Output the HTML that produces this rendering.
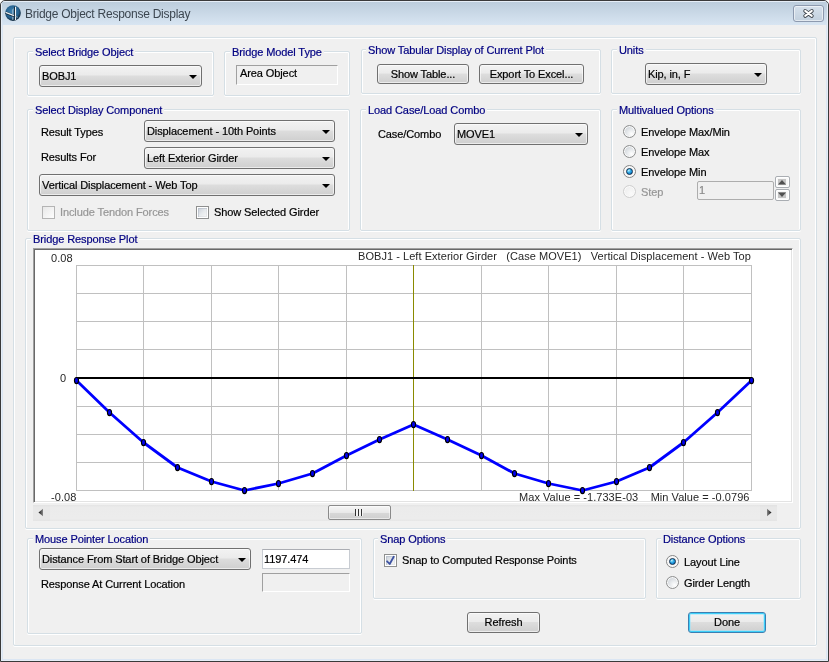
<!DOCTYPE html><html><head><meta charset="utf-8"><style>
*{margin:0;padding:0}
html,body{width:829px;height:662px;overflow:hidden;background:#fff}
body{position:relative;font-family:"Liberation Sans",sans-serif;font-size:11px}
.ui,.gl,.pt{position:absolute;white-space:pre;line-height:13px;font-size:11px;letter-spacing:-0.1px;will-change:transform}
.gl{color:#000082;background:#f0f0f0;padding:0 2px}
.ui,.gl,.btn{-webkit-text-stroke:0.2px currentColor}
.pt{color:#262626;letter-spacing:0.05px;-webkit-text-stroke:0}
.gb{position:absolute;box-sizing:border-box;border:1px solid #d5dfe5;border-radius:2px;box-shadow:inset 1px 1px 0 #fff, inset -1px 0 0 #fff, 0 1px 0 #fff}
.cb,.btn{position:absolute;box-sizing:border-box;border:1px solid #707070;border-radius:3px;
 background:linear-gradient(#f2f2f2 0%,#ebebeb 45%,#dddddd 50%,#cfcfcf 100%);box-shadow:inset 0 0 0 1px rgba(255,255,255,0.6)}
.btn{text-align:center;white-space:pre;letter-spacing:-0.1px;will-change:transform}
.btn.def{border-color:#3c7fb1;box-shadow:inset 0 0 0 1px #3dd0fa, inset 0 0 0 2px rgba(150,230,255,0.5)}
.arr{position:absolute;width:0;height:0;border-left:4px solid transparent;border-right:4px solid transparent;border-top:4px solid #000}
.chk{position:absolute;width:13px;height:13px;box-sizing:border-box;border:1px solid #8e8f8f;background:#fff}
.chk::before{content:"";position:absolute;left:1px;top:1px;width:9px;height:9px;background:linear-gradient(135deg,#c9cfd8 0%,#e6e9ec 50%,#f7f7f7 100%);box-shadow:inset 1px 1px 0 rgba(160,170,185,0.4),inset -1px -1px 0 rgba(205,210,216,0.35)}
.chk.dis{border-color:#b4b4b4}
.chk.dis::before{left:0;top:0;width:11px;height:11px;background:linear-gradient(135deg,#e8e8e8,#fdfdfd);box-shadow:none}
.chk svg{z-index:2;position:absolute}
.rad{position:absolute;width:13px;height:13px;box-sizing:border-box;border-radius:50%;border:1px solid #8e8f8f;background:radial-gradient(circle at 68% 72%,#ffffff 0%,#e3e6e9 45%,#c2c8ce 100%);box-shadow:inset 0 0 0 1px #fafafa}
.rad.dis{border-color:#cfcfcf;background:radial-gradient(circle at 65% 70%,#fafafa,#eaeaea)}
.rad.sel{border-color:#858585;background:#f6f6f6}
.rad .dot{position:absolute;left:2px;top:2px;width:7px;height:7px;box-sizing:border-box;border-radius:50%;border:1px solid #0b2c4e;background:radial-gradient(circle at 35% 30%,#c8f4ff 0%,#3cb4ea 35%,#1284d0 70%,#0a5a98 100%)}
</style></head><body>
<div style="position:absolute;left:0px;top:0px;width:829px;height:662px;box-sizing:border-box;border:1px solid #3a3a3a;border-radius:5px 5px 0 0;background:#dbe6f3"></div>
<div style="position:absolute;left:1px;top:1px;width:827px;height:660px;box-sizing:border-box;border:1px solid #e6eef7;border-radius:4px 4px 0 0;background:transparent"></div>
<div style="position:absolute;left:2px;top:2px;width:825px;height:23px;box-sizing:border-box;background:linear-gradient(#bccddc,#d8e5f2)"></div>
<div style="position:absolute;left:3px;top:25px;width:823px;height:634px;box-sizing:border-box;background:#f0f0f0"></div>
<svg style="position:absolute;left:5px;top:5px" width="16" height="16" viewBox="0 0 16 16"><defs><radialGradient id="ig" cx="45%" cy="40%" r="60%"><stop offset="0" stop-color="#3c82b2"/><stop offset="0.7" stop-color="#26608c"/><stop offset="1" stop-color="#0c2438"/></radialGradient></defs><circle cx="8" cy="8.1" r="7.8" fill="url(#ig)"/><path d="M9.6 1.6 V15" stroke="#0b1f30" stroke-width="1"/><path d="M10.5 1.8 V15" stroke="#eef4f8" stroke-width="1.1"/><path d="M7.8 14.8 V4.6 Q7.8 4 8.6 4" stroke="#b4c4d0" stroke-width="0.9" fill="none"/><path d="M0.6 7.7 L9 11" stroke="#0b1f30" stroke-width="2.4"/><path d="M0.6 7.4 L9 10.7" stroke="#e8eff3" stroke-width="1.4"/><path d="M10.5 11.4 L13 12.4" stroke="#90a4b2" stroke-width="0.8"/></svg>
<div style="position:absolute;left:25px;top:7px;font-size:12px;line-height:14px;color:#3c4650;white-space:pre;letter-spacing:-0.25px;will-change:transform">Bridge Object Response Display</div>
<div style="position:absolute;left:793px;top:5px;width:31px;height:17px;box-sizing:border-box;border:1px solid #8d9aaf;border-radius:3px;background:linear-gradient(#d6e1ec,#c2d0de);box-shadow:inset 0 0 0 1px rgba(255,255,255,0.55)"></div>
<svg style="position:absolute;left:802px;top:8px" width="13" height="11" viewBox="0 0 13 11"><path d="M3.2 2.9 L9.8 7.9 M9.8 2.9 L3.2 7.9" stroke="#3a4048" stroke-width="3.8" stroke-linecap="round"/><path d="M3.2 2.9 L9.8 7.9 M9.8 2.9 L3.2 7.9" stroke="#ffffff" stroke-width="2" stroke-linecap="round"/></svg>
<div class="gb" style="left:13px;top:37px;width:804px;height:609px;border-radius:2px"></div>
<div class="gb" style="left:27px;top:51px;width:187px;height:45px"></div>
<div class="gl" style="left:33px;top:46px">Select Bridge Object</div>
<div class="gb" style="left:224px;top:51px;width:126px;height:45px"></div>
<div class="gl" style="left:230px;top:46px">Bridge Model Type</div>
<div class="gb" style="left:361px;top:49px;width:240px;height:45px"></div>
<div class="gl" style="left:366px;top:44px">Show Tabular Display of Current Plot</div>
<div class="gb" style="left:611px;top:49px;width:190px;height:45px"></div>
<div class="gl" style="left:617px;top:44px">Units</div>
<div class="gb" style="left:27px;top:109px;width:323px;height:122px"></div>
<div class="gl" style="left:33px;top:104px">Select Display Component</div>
<div class="gb" style="left:360px;top:109px;width:241px;height:122px"></div>
<div class="gl" style="left:366px;top:104px">Load Case/Load Combo</div>
<div class="gb" style="left:611px;top:109px;width:190px;height:122px"></div>
<div class="gl" style="left:617px;top:104px">Multivalued Options</div>
<div class="gb" style="left:25px;top:238px;width:776px;height:291px"></div>
<div class="gl" style="left:31px;top:233px">Bridge Response Plot</div>
<div class="gb" style="left:27px;top:538px;width:335px;height:96px"></div>
<div class="gl" style="left:33px;top:533px">Mouse Pointer Location</div>
<div class="gb" style="left:373px;top:538px;width:273px;height:61px"></div>
<div class="gl" style="left:378px;top:533px">Snap Options</div>
<div class="gb" style="left:656px;top:538px;width:145px;height:61px"></div>
<div class="gl" style="left:661px;top:533px">Distance Options</div>
<div class="cb" style="left:39px;top:65px;width:163px;height:22px"></div>
<div class="ui" style="left:42px;top:70px;color:#000;">BOBJ1</div>
<div class="arr" style="left:189px;top:75px"></div>
<div style="position:absolute;left:236px;top:65px;width:102px;height:20px;box-sizing:border-box;border-top:1px solid #a0a0a0;border-left:1px solid #a0a0a0;border-right:1px solid #fff;border-bottom:1px solid #fff;background:#f0f0f0"></div>
<div class="ui" style="left:240px;top:67px;color:#000;">Area Object</div>
<div class="btn" style="left:377px;top:64px;width:92px;height:20px;line-height:18px">Show Table...</div>
<div class="btn" style="left:479px;top:64px;width:105px;height:20px;line-height:18px">Export To Excel...</div>
<div class="cb" style="left:645px;top:63px;width:122px;height:22px"></div>
<div class="ui" style="left:648px;top:68px;color:#000;">Kip, in, F</div>
<div class="arr" style="left:754px;top:73px"></div>
<div class="ui" style="left:41px;top:126px;color:#000;">Result Types</div>
<div class="cb" style="left:144px;top:120px;width:191px;height:22px"></div>
<div class="ui" style="left:147px;top:125px;color:#000;">Displacement - 10th Points</div>
<div class="arr" style="left:322px;top:130px"></div>
<div class="ui" style="left:41px;top:151px;color:#000;">Results For</div>
<div class="cb" style="left:144px;top:147px;width:191px;height:22px"></div>
<div class="ui" style="left:147px;top:152px;color:#000;">Left Exterior Girder</div>
<div class="arr" style="left:322px;top:157px"></div>
<div class="cb" style="left:39px;top:174px;width:296px;height:22px"></div>
<div class="ui" style="left:42px;top:179px;color:#000;">Vertical Displacement - Web Top</div>
<div class="arr" style="left:322px;top:184px"></div>
<div class="chk dis" style="left:42px;top:206px"></div>
<div class="ui" style="left:60px;top:206px;color:#969696;">Include Tendon Forces</div>
<div class="chk" style="left:196px;top:206px"></div>
<div class="ui" style="left:214px;top:206px;color:#000;">Show Selected Girder</div>
<div class="ui" style="left:378px;top:128px;color:#000;">Case/Combo</div>
<div class="cb" style="left:454px;top:123px;width:134px;height:22px"></div>
<div class="ui" style="left:457px;top:128px;color:#000;">MOVE1</div>
<div class="arr" style="left:575px;top:133px"></div>
<div class="rad" style="left:623px;top:125px"></div>
<div class="ui" style="left:641px;top:126px;color:#000;">Envelope Max/Min</div>
<div class="rad" style="left:623px;top:145px"></div>
<div class="ui" style="left:641px;top:146px;color:#000;">Envelope Max</div>
<div class="rad sel" style="left:623px;top:165px"><div class="dot"></div></div>
<div class="ui" style="left:641px;top:166px;color:#000;">Envelope Min</div>
<div class="rad dis" style="left:623px;top:185px"></div>
<div class="ui" style="left:641px;top:186px;color:#969696;">Step</div>
<div style="position:absolute;left:697px;top:181px;width:77px;height:19px;box-sizing:border-box;border:1px solid #adadad;border-radius:2px;background:#f0f0f0"></div>
<div class="ui" style="left:699px;top:184px;color:#8a8a8a;">1</div>
<div style="position:absolute;left:775px;top:176px;width:15px;height:12px;box-sizing:border-box;border:1px solid #a9adb2;border-radius:2px;background:#f7f7f7;box-shadow:inset 0 0 0 1px #fff"></div>
<div style="position:absolute;left:778px;top:179px;width:8px;height:6px;box-sizing:border-box;background:#c4c4c4"></div>
<svg style="position:absolute;left:777px;top:178px" width="10" height="8"><path d="M1 6.5 L5 2 L9 6.5 Z" fill="#505050"/></svg>
<div style="position:absolute;left:775px;top:189px;width:15px;height:12px;box-sizing:border-box;border:1px solid #a9adb2;border-radius:2px;background:#f7f7f7;box-shadow:inset 0 0 0 1px #fff"></div>
<div style="position:absolute;left:778px;top:192px;width:8px;height:6px;box-sizing:border-box;background:#c4c4c4"></div>
<svg style="position:absolute;left:777px;top:191px" width="10" height="8"><path d="M1 1.5 L5 6 L9 1.5 Z" fill="#505050"/></svg>
<div style="position:absolute;left:33px;top:248px;width:760px;height:255px;box-sizing:border-box;border-top:1px solid #a0a0a0;border-left:1px solid #a0a0a0;border-right:1px solid #fff;border-bottom:1px solid #fff;box-shadow:inset 1px 1px 0 #696969, inset -1px -1px 0 #e3e3e3;background:#fff"></div>
<svg style="position:absolute;left:0;top:0" width="829" height="662" viewBox="0 0 829 662" shape-rendering="crispEdges"><line x1="76.5" y1="265" x2="76.5" y2="491" stroke="#c0c0c0" stroke-width="1"/><line x1="143.5" y1="265" x2="143.5" y2="491" stroke="#c0c0c0" stroke-width="1"/><line x1="211.5" y1="265" x2="211.5" y2="491" stroke="#c0c0c0" stroke-width="1"/><line x1="278.5" y1="265" x2="278.5" y2="491" stroke="#c0c0c0" stroke-width="1"/><line x1="346.5" y1="265" x2="346.5" y2="491" stroke="#c0c0c0" stroke-width="1"/><line x1="413.5" y1="265" x2="413.5" y2="491" stroke="#c0c0c0" stroke-width="1"/><line x1="481.5" y1="265" x2="481.5" y2="491" stroke="#c0c0c0" stroke-width="1"/><line x1="548.5" y1="265" x2="548.5" y2="491" stroke="#c0c0c0" stroke-width="1"/><line x1="616.5" y1="265" x2="616.5" y2="491" stroke="#c0c0c0" stroke-width="1"/><line x1="683.5" y1="265" x2="683.5" y2="491" stroke="#c0c0c0" stroke-width="1"/><line x1="751.5" y1="265" x2="751.5" y2="491" stroke="#c0c0c0" stroke-width="1"/><line x1="76" y1="265.5" x2="752" y2="265.5" stroke="#c0c0c0" stroke-width="1"/><line x1="76" y1="293.5" x2="752" y2="293.5" stroke="#c0c0c0" stroke-width="1"/><line x1="76" y1="321.5" x2="752" y2="321.5" stroke="#c0c0c0" stroke-width="1"/><line x1="76" y1="349.5" x2="752" y2="349.5" stroke="#c0c0c0" stroke-width="1"/><line x1="76" y1="377.5" x2="752" y2="377.5" stroke="#c0c0c0" stroke-width="1"/><line x1="76" y1="406.5" x2="752" y2="406.5" stroke="#c0c0c0" stroke-width="1"/><line x1="76" y1="434.5" x2="752" y2="434.5" stroke="#c0c0c0" stroke-width="1"/><line x1="76" y1="462.5" x2="752" y2="462.5" stroke="#c0c0c0" stroke-width="1"/><line x1="76" y1="490.5" x2="752" y2="490.5" stroke="#c0c0c0" stroke-width="1"/><line x1="413.5" y1="265" x2="413.5" y2="491" stroke="#8a8a00" stroke-width="1"/><rect x="76" y="377" width="676" height="2" fill="#000"/></svg><svg style="position:absolute;left:0;top:0" width="829" height="662" viewBox="0 0 829 662"><polyline points="76.5,380.5 109.5,412.5 143.5,442.5 177.5,467.5 211.5,481.5 244.5,490.5 278.5,483.5 312.5,473.5 346.5,455.5 379.5,439.5 413.5,424.5 447.5,439.5 481.5,455.5 514.5,473.5 548.5,483.5 582.5,490.5 616.5,481.5 649.5,467.5 683.5,442.5 717.5,412.5 751.5,380.5" fill="none" stroke="#0000ff" stroke-width="2.8" stroke-linejoin="round"/><ellipse cx="76.5" cy="380.5" rx="2.05" ry="3.05" fill="#0000f0" stroke="#000" stroke-width="1.15"/><ellipse cx="109.5" cy="412.5" rx="2.05" ry="3.05" fill="#0000f0" stroke="#000" stroke-width="1.15"/><ellipse cx="143.5" cy="442.5" rx="2.05" ry="3.05" fill="#0000f0" stroke="#000" stroke-width="1.15"/><ellipse cx="177.5" cy="467.5" rx="2.05" ry="3.05" fill="#0000f0" stroke="#000" stroke-width="1.15"/><ellipse cx="211.5" cy="481.5" rx="2.05" ry="3.05" fill="#0000f0" stroke="#000" stroke-width="1.15"/><ellipse cx="244.5" cy="490.5" rx="2.05" ry="3.05" fill="#0000f0" stroke="#000" stroke-width="1.15"/><ellipse cx="278.5" cy="483.5" rx="2.05" ry="3.05" fill="#0000f0" stroke="#000" stroke-width="1.15"/><ellipse cx="312.5" cy="473.5" rx="2.05" ry="3.05" fill="#0000f0" stroke="#000" stroke-width="1.15"/><ellipse cx="346.5" cy="455.5" rx="2.05" ry="3.05" fill="#0000f0" stroke="#000" stroke-width="1.15"/><ellipse cx="379.5" cy="439.5" rx="2.05" ry="3.05" fill="#0000f0" stroke="#000" stroke-width="1.15"/><ellipse cx="413.5" cy="424.5" rx="2.05" ry="3.05" fill="#0000f0" stroke="#000" stroke-width="1.15"/><ellipse cx="447.5" cy="439.5" rx="2.05" ry="3.05" fill="#0000f0" stroke="#000" stroke-width="1.15"/><ellipse cx="481.5" cy="455.5" rx="2.05" ry="3.05" fill="#0000f0" stroke="#000" stroke-width="1.15"/><ellipse cx="514.5" cy="473.5" rx="2.05" ry="3.05" fill="#0000f0" stroke="#000" stroke-width="1.15"/><ellipse cx="548.5" cy="483.5" rx="2.05" ry="3.05" fill="#0000f0" stroke="#000" stroke-width="1.15"/><ellipse cx="582.5" cy="490.5" rx="2.05" ry="3.05" fill="#0000f0" stroke="#000" stroke-width="1.15"/><ellipse cx="616.5" cy="481.5" rx="2.05" ry="3.05" fill="#0000f0" stroke="#000" stroke-width="1.15"/><ellipse cx="649.5" cy="467.5" rx="2.05" ry="3.05" fill="#0000f0" stroke="#000" stroke-width="1.15"/><ellipse cx="683.5" cy="442.5" rx="2.05" ry="3.05" fill="#0000f0" stroke="#000" stroke-width="1.15"/><ellipse cx="717.5" cy="412.5" rx="2.05" ry="3.05" fill="#0000f0" stroke="#000" stroke-width="1.15"/><ellipse cx="751.5" cy="380.5" rx="2.05" ry="3.05" fill="#0000f0" stroke="#000" stroke-width="1.15"/></svg>
<div class="pt" style="left:51px;top:252px;color:#262626;">0.08</div>
<div class="pt" style="left:60px;top:372px;color:#262626;">0</div>
<div class="pt" style="left:51px;top:491px;color:#262626;">-0.08</div>
<div class="pt" style="left:358px;top:250px;color:#262626;">BOBJ1 - Left Exterior Girder   (Case MOVE1)   Vertical Displacement - Web Top</div>
<div class="pt" style="left:519px;top:491px;color:#262626;">Max Value = -1.733E-03    Min Value = -0.0796</div>
<div style="position:absolute;left:33px;top:505px;width:744px;height:16px;box-sizing:border-box;background:linear-gradient(#e4e4e4,#ebebeb 15%,#ececec 85%,#e6e6e6);"></div>
<div style="position:absolute;left:33px;top:505px;width:17px;height:16px;box-sizing:border-box;background:linear-gradient(#e2e2e2,#e8e8e8 15%,#e8e8e8 85%,#e4e4e4)"></div>
<div style="position:absolute;left:760px;top:505px;width:17px;height:16px;box-sizing:border-box;background:linear-gradient(#e2e2e2,#e8e8e8 15%,#e8e8e8 85%,#e4e4e4)"></div>
<svg style="position:absolute;left:37px;top:508px" width="8" height="10"><defs><linearGradient id="la" x1="0" y1="0" x2="1" y2="0"><stop offset="0" stop-color="#101010"/><stop offset="1" stop-color="#8a8a8a"/></linearGradient></defs><path d="M1.5 4.5 L6 0.8 L6 8.2 Z" fill="url(#la)"/></svg>
<svg style="position:absolute;left:765px;top:508px" width="8" height="10"><defs><linearGradient id="ra" x1="0" y1="0" x2="1" y2="0"><stop offset="0" stop-color="#8a8a8a"/><stop offset="1" stop-color="#101010"/></linearGradient></defs><path d="M6.5 4.5 L2 0.8 L2 8.2 Z" fill="url(#ra)"/></svg>
<div style="position:absolute;left:328px;top:505px;width:63px;height:15px;box-sizing:border-box;border:1px solid #8a8a8a;border-radius:2px;background:linear-gradient(#f6f6f6,#e9e9e9 50%,#d8d8d8 51%,#cfcfcf);box-shadow:inset 0 0 0 1px rgba(255,255,255,0.5)"></div>
<div style="position:absolute;left:355px;top:509px;width:8px;height:7px;background:repeating-linear-gradient(90deg,#333 0 1px,#f4f4f4 1px 3px)"></div>
<div class="cb" style="left:39px;top:548px;width:212px;height:22px"></div>
<div class="ui" style="left:42px;top:553px;color:#000;">Distance From Start of Bridge Object</div>
<div class="arr" style="left:238px;top:558px"></div>
<div style="position:absolute;left:262px;top:549px;width:88px;height:20px;box-sizing:border-box;border:1px solid #c8ccd2;border-top-color:#abadb3;background:#fff"></div>
<div class="ui" style="left:264px;top:553px;color:#000;">1197.474</div>
<div class="ui" style="left:41px;top:578px;color:#000;">Response At Current Location</div>
<div style="position:absolute;left:262px;top:573px;width:88px;height:19px;box-sizing:border-box;border-top:1px solid #a0a0a0;border-left:1px solid #a0a0a0;border-right:1px solid #fff;border-bottom:1px solid #fff;background:#f0f0f0"></div>
<div class="chk" style="left:384px;top:554px"><svg width="13" height="13" style="position:absolute;left:-1px;top:-1px"><path d="M3.1 7.3 L5.7 10 L9.7 2.7" stroke="#3d52a2" stroke-width="1.8" fill="none" stroke-linecap="round" stroke-linejoin="round"/></svg></div>
<div class="ui" style="left:402px;top:554px;color:#000;">Snap to Computed Response Points</div>
<div class="rad sel" style="left:666px;top:555px"><div class="dot"></div></div>
<div class="ui" style="left:684px;top:556px;color:#000;">Layout Line</div>
<div class="rad" style="left:666px;top:576px"></div>
<div class="ui" style="left:684px;top:577px;color:#000;">Girder Length</div>
<div class="btn" style="left:467px;top:612px;width:73px;height:21px;line-height:19px">Refresh</div>
<div class="btn def" style="left:688px;top:612px;width:78px;height:21px;line-height:19px">Done</div>
</body></html>
